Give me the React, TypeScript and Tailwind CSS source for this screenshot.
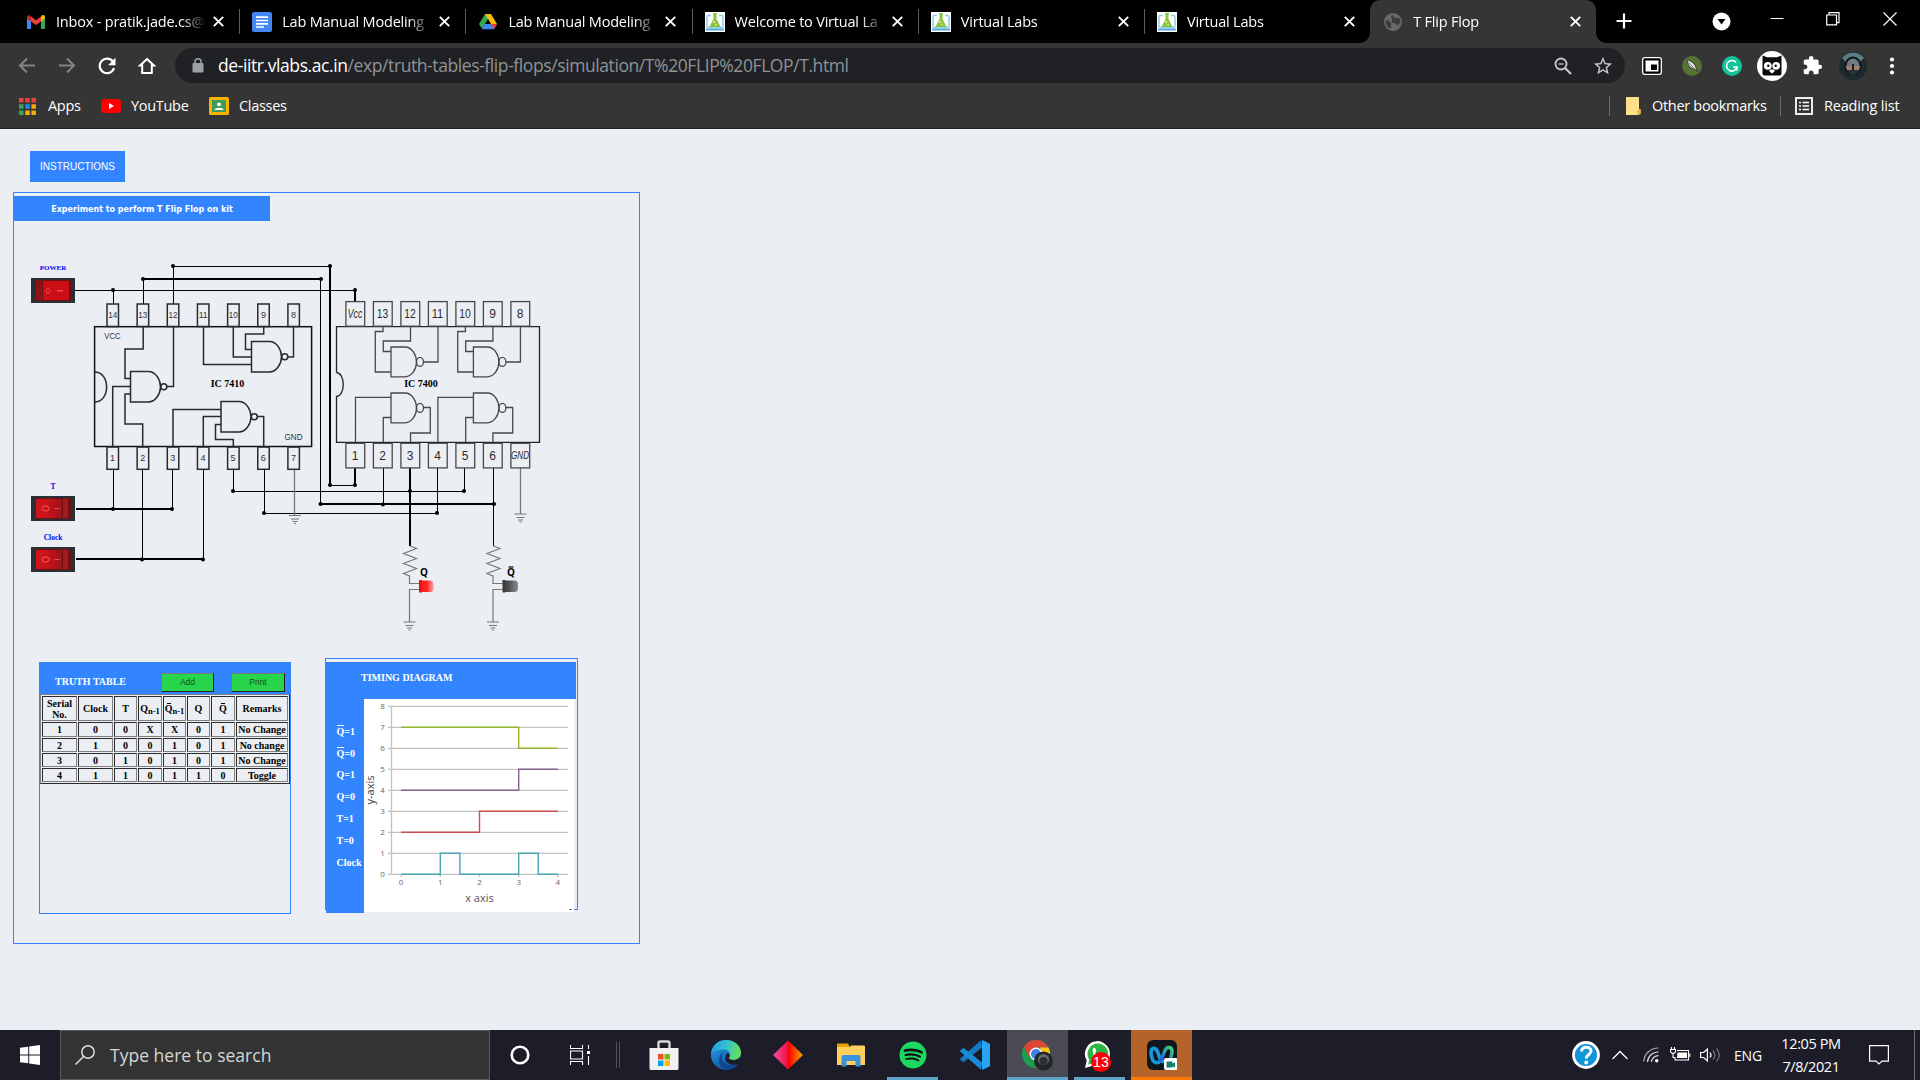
import React from "react";
import { FaSpotify } from "react-icons/fa";
import { MdExtension, MdStarBorder } from "react-icons/md";

const ui = "font-['Open_Sans','Noto_Sans',sans-serif]";
const serif = "font-['Liberation_Serif',serif]";

/* ---------- tab icons ---------- */

const GmailIcon = () => (
  <svg className="h-5 w-5" viewBox="0 0 20 20">
    <path d="M1 5v11.2c0 .5.4.8.9.8H5V9z" fill="#4285f4" />
    <path d="M19 5v11.2c0 .5-.4.8-.9.8H15V9z" fill="#34a853" />
    <path d="M15 4.6V9.4l4-3V5c0-2-2-2.6-3.2-1.6z" fill="#fbbc04" />
    <path d="M5 9.400V4.600l5 3.700 5-3.700v4.800l-5 3.700z" fill="#ea4335" />
    <path d="M1 5v1.400l4 3V4.600L4.200 3.800C3 2.600 1 3 1 5z" fill="#c5221f" />
  </svg>
);

const DocsIcon = () => (
  <svg className="h-5 w-5" viewBox="0 0 20 20">
    <rect width="20" height="20" rx="2" fill="#4285f4" />
    <path d="M4 5.200h12M4 8.500h12M4 11.800h12M4 15h8" stroke="#fff" strokeWidth="1.700" />
  </svg>
);

const DriveIcon = () => (
  <svg className="h-5 w-5" viewBox="0 0 20 20">
    <path d="M7 2h6l-3 5.200L4.200 17 1 12z" fill="#34a853" />
    <path d="M7 2h6l6 10h-6.200z" fill="#fbbc04" />
    <path d="M6.800 12H19l-3 5.300H4z" fill="#4285f4" />
    <path d="M13 12h6l-3 5.300z" fill="#ea4335" />
    <path d="M10 7.400 13 12H7z" fill="#000" />
  </svg>
);

const VlabsIcon = () => (
  <svg className="h-5 w-5" viewBox="0 0 20 20">
    <rect width="20" height="20" fill="#fff" />
    <path d="M6 3.500H3.500a1.500 1.500 0 0 0-1.500 1.500v9a1.500 1.500 0 0 0 1.500 1.500h13A1.500 1.500 0 0 0 18 14V5a1.500 1.500 0 0 0-1.500-1.500H14" fill="none" stroke="#8ccbe8" strokeWidth="1.500" />
    <path d="M8 1h4v1.500h-.500V7l4.200 8H4.300L8.500 7V2.500H8z" fill="#8bc53f" />
    <circle cx="9" cy="10" r="1" fill="#e8f5c8" />
    <circle cx="11" cy="12.500" r=".8" fill="#e8f5c8" />
    <path d="M1 17.500h18" stroke="#4fa9d8" strokeWidth="2" />
  </svg>
);

const GlobeIcon = () => (
  <svg className="h-5 w-5" viewBox="0 0 20 20">
    <circle cx="10" cy="10" r="9" fill="#66696d" />
    <path d="M3 8c3 .5 4 1.500 5 3s-1 2.500 0 4-2 2-3 0-3-4-2-7zM9 3c2 0 1 2.500 3 3s4-1 5 1 0 5-2 6-2-2-4-2-3-1.500-2-3-1-2-1-3z" fill="#3a3b3d" />
  </svg>
);

const Close = () => (
  <svg className="h-[11px] w-[11px]" viewBox="0 0 11 11">
    <path d="M.8.8l9.400 9.400M10.200.8L.8 10.200" stroke="#fff" strokeWidth="1.900" />
  </svg>
);

const tabs = [
  { icon: <GmailIcon />, label: "Inbox - pratik.jade.cs@" },
  { icon: <DocsIcon />, label: "Lab Manual Modeling" },
  { icon: <DriveIcon />, label: "Lab Manual Modeling" },
  { icon: <VlabsIcon />, label: "Welcome to Virtual La" },
  { icon: <VlabsIcon />, label: "Virtual Labs" },
  { icon: <VlabsIcon />, label: "Virtual Labs" },
];

function Tab({ icon, label, sep }: { icon: React.ReactNode; label: string; sep?: boolean }) {
  return (
    <div className="relative flex h-full w-[226.2px] items-center pl-[13px]">
      {icon}
      <div className="ml-[10px] w-[150px] overflow-hidden whitespace-nowrap text-[14.5px] tracking-[-0.200px] text-white [mask-image:linear-gradient(to_right,#000_84%,transparent)]">
        {label}
      </div>
      <div className="ml-[7px]">
        <Close />
      </div>
      {sep && <div className="absolute right-[-1px] top-[9px] h-[25px] w-px bg-[#5c5c5c]" />}
    </div>
  );
}

function TabStrip() {
  return (
    <div className="flex h-[43px] bg-black pl-[13px]">
      {tabs.map((t, i) => (
        <Tab key={i} icon={t.icon} label={t.label} sep={i < 5} />
      ))}
      <div className="relative h-full rounded-t-[10px] bg-[#353535]">
        <Tab icon={<GlobeIcon />} label="T Flip Flop" />
        <div className="absolute bottom-0 left-[-10px] h-[10px] w-[10px] bg-[radial-gradient(circle_at_0_0,#000_9.500px,#353535_10px)]" />
        <div className="absolute bottom-0 right-[-10px] h-[10px] w-[10px] bg-[radial-gradient(circle_at_100%_0,#000_9.500px,#353535_10px)]" />
      </div>
      <svg className="ml-[20px] mt-[13px] h-4 w-4" viewBox="0 0 16 16">
        <path d="M8 .5v15M.5 8h15" stroke="#fff" strokeWidth="2.200" />
      </svg>
      <svg className="ml-[80px] mt-[12px] h-[19px] w-[19px]" viewBox="0 0 19 19">
        <circle cx="9.500" cy="9.500" r="9" fill="#fff" />
        <path d="M5.500 7h8l-4 5.500z" fill="#000" />
      </svg>
      <svg className="ml-[39px] mt-[12px] h-[14px] w-[14px]" viewBox="0 0 14 14">
        <path d="M.5 6.500h13" stroke="#fff" />
      </svg>
      <svg className="ml-[42px] mt-[12px] h-[14px] w-[14px]" viewBox="0 0 14 14" fill="none" stroke="#fff" strokeWidth="1.200">
        <path d="M.7 3h9.800v9.800H.7zM3 3V.7h10v10h-2.500" />
      </svg>
      <svg className="ml-[43px] mt-[12px] h-[14px] w-[14px]" viewBox="0 0 14 14">
        <path d="M.5.500l13 13M13.500.500l-13 13" stroke="#fff" strokeWidth="1.200" />
      </svg>
    </div>
  );
}

function Toolbar() {
  return (
    <div className="flex h-[45px] items-center bg-[#353535]">
      <svg className="ml-[18px] h-[17px] w-[17px]" viewBox="0 0 17 17" fill="none" stroke="#848484" strokeWidth="2">
        <path d="M17 8.500H2M9 1.500l-7 7 7 7" />
      </svg>
      <svg className="ml-[24px] h-[17px] w-[17px]" viewBox="0 0 17 17" fill="none" stroke="#848484" strokeWidth="2">
        <path d="M0 8.500h15M8 1.500l7 7-7 7" />
      </svg>
      <svg className="ml-[22px] h-[18px] w-[18px]" viewBox="0 0 18 18">
        <path d="M15 4.700A7.300 7.300 0 1 0 16 11" fill="none" stroke="#fff" strokeWidth="2.200" />
        <path d="M17.500.8v7.400h-7.400z" fill="#fff" />
      </svg>
      <svg className="ml-[22px] h-[18px] w-[18px]" viewBox="0 0 18 18">
        <path d="M9 2l7 6.600h-2.200V16H4.200V8.600H2z" fill="none" stroke="#fff" strokeWidth="2" />
      </svg>
      <div className="ml-[19px] flex h-[35px] w-[1450px] items-center rounded-full bg-[#202124]">
        <svg className="ml-[17px] h-[15px] w-[12px]" viewBox="0 0 12 15">
          <rect x=".5" y="5" width="11" height="9.500" rx="1" fill="#9aa0a6" />
          <path d="M3 6V3.800a3 3 0 0 1 6 0V6" fill="none" stroke="#9aa0a6" strokeWidth="1.500" />
        </svg>
        <div className="ml-[14px] w-[1320px] whitespace-nowrap text-[17.500px] tracking-[-0.410px] text-[#8f9398]">
          <span className="text-white">de-iitr.vlabs.ac.in</span>/exp/truth-tables-flip-flops/simulation/T%20FLIP%20FLOP/T.html
        </div>
        <svg className="ml-[16px] h-[18px] w-[18px] shrink-0" viewBox="0 0 18 18" fill="none" stroke="#c4c7ca">
          <circle cx="7" cy="7" r="5.500" strokeWidth="1.900" />
          <path d="M11 11l6 6" strokeWidth="2.300" />
          <path d="M4.500 7h5" strokeWidth="1.300" />
        </svg>
        <MdStarBorder className="ml-[20px] h-[22px] w-[22px] shrink-0 text-[#c4c7ca]" />
      </div>
      <svg className="ml-[17px] h-[20px] w-[20px]" viewBox="0 0 20 20">
        <rect x=".7" y="1.700" width="18.600" height="16.600" rx="2" fill="#000" stroke="#fff" strokeWidth="1.300" />
        <rect x="3.500" y="4.500" width="13" height="11" fill="#fff" />
        <rect x="9" y="8.500" width="6" height="5.500" fill="#000" />
      </svg>
      <svg className="ml-[20px] h-[20px] w-[20px]" viewBox="0 0 20 20">
        <circle cx="10" cy="10" r="10" fill="#567335" />
        <path d="M5 4c5 1 8 4 9 8l1.500 3.500L12 13C8 12 5.500 8 5 4z" fill="#e8ece2" stroke="#222" strokeWidth=".8" />
        <path d="M6.500 6l7 8" stroke="#444" strokeWidth=".7" />
      </svg>
      <svg className="ml-[20px] h-[20px] w-[20px]" viewBox="0 0 20 20">
        <circle cx="10" cy="10" r="10" fill="#15c39a" />
        <path d="M14 6.500A5.300 5.300 0 1 0 15 11H11" fill="none" stroke="#fff" strokeWidth="1.700" />
        <path d="M14.900 10.500v4" stroke="#fff" strokeWidth="1.300" />
      </svg>
      <svg className="ml-[15px] h-[30px] w-[30px]" viewBox="0 0 30 30">
        <circle cx="15" cy="15" r="15" fill="#fff" />
        <path d="M5.500 4.500l4.500 1.800h10l4.500-1.800V22.500a2 2 0 0 1-2 2h-15a2 2 0 0 1-2-2z" fill="#0b0b0b" />
        <circle cx="10.800" cy="14.800" r="3.900" fill="#fff" />
        <circle cx="19.200" cy="14.800" r="3.900" fill="#fff" />
        <circle cx="11.300" cy="14.800" r="1.200" />
        <circle cx="18.700" cy="14.800" r="1.200" />
        <path d="M13.500 18.500h3L18 20l-3 2.500-3-2.500z" fill="#fff" />
      </svg>
      <MdExtension className="ml-[15px] h-[21px] w-[21px] text-white" />
      <svg className="ml-[16px] h-[28px] w-[28px]" viewBox="0 0 28 28">
        <circle cx="14" cy="14" r="14" fill="#1c2a2e" />
        <path d="M3 6A14 14 0 0 1 25 6L21 10 14 5 7 10z" fill="#5c7d86" />
        <ellipse cx="14" cy="14" rx="7.500" ry="8.500" fill="#6f7a82" stroke="#0f1719" strokeWidth="2" />
        <path d="M7 14h14c0 2-1 4-2 5H9c-1-1-2-3-2-5z" fill="#a07f72" />
        <path d="M8 18h12c-1 3-4 5-6 5s-5-2-6-5z" fill="#263438" />
        <path d="M13 12h2v7h-2z" fill="#171d20" />
      </svg>
      <svg className="ml-[22px] h-[18px] w-[6px]" viewBox="0 0 6 18" fill="#fff">
        <circle cx="3" cy="2.500" r="2.100" />
        <circle cx="3" cy="9" r="2.100" />
        <circle cx="3" cy="15.500" r="2.100" />
      </svg>
    </div>
  );
}

function Bookmarks() {
  return (
    <div className="flex h-[41px] items-center border-b border-[#222] bg-[#353535] pb-[4px] text-[14.500px] tracking-[-0.300px] text-white">
      <svg className="ml-[19px] h-[17px] w-[17px]" viewBox="0 0 17 17">
        <path d="M0 0h4.500v4.500H0zM6.200 0h4.500v4.500H6.200zM12.400 0h4.500v4.500h-4.500z" fill="#ea4335" />
        <path d="M0 6.200h4.500v4.500H0zM0 12.400h4.500v4.500H0z" fill="#34a853" />
        <path d="M6.200 6.200h4.500v4.500H6.200z" fill="#1a8cff" />
        <path d="M12.400 6.200h4.500v4.500h-4.500zM6.200 12.400h4.500v4.500H6.200zM12.400 12.400h4.500v4.500h-4.500z" fill="#f9ab00" />
      </svg>
      <span className="ml-[12px] w-[34px]">Apps</span>
      <svg className="ml-[19px] h-[14px] w-[20px]" viewBox="0 0 20 14">
        <rect width="20" height="14" rx="3.500" fill="#f00" />
        <path d="M8 4l5 3-5 3z" fill="#fff" />
      </svg>
      <span className="ml-[10px] w-[59px]">YouTube</span>
      <svg className="ml-[19px] h-[18px] w-[20px]" viewBox="0 0 20 18">
        <rect width="20" height="18" rx="1.500" fill="#f4b400" />
        <rect x="3" y="3" width="14" height="12" fill="#3d9c57" />
        <circle cx="10" cy="7.300" r="1.900" fill="#fff" />
        <path d="M5.500 13c0-3 9-3 9 0z" fill="#fff" />
      </svg>
      <span className="ml-[10px]">Classes</span>
      <div className="ml-auto h-[20px] w-px bg-[#6b6b6b]" />
      <svg className="ml-[15px] h-[18px] w-[16px]" viewBox="0 0 16 18">
        <path d="M1 0h13v12h1.500v5l-2.500 1H1z" fill="#ffe08a" />
        <path d="M13 18l-1-4 2-2h1.500v5z" fill="#e9bb3d" />
      </svg>
      <span className="ml-[11px] w-[117px]">Other bookmarks</span>
      <div className="ml-[11px] h-[20px] w-px bg-[#6b6b6b]" />
      <svg className="ml-[14px] h-[18px] w-[18px]" viewBox="0 0 18 18" fill="none" stroke="#fff">
        <rect x="1" y="1" width="16" height="16" strokeWidth="1.800" />
        <path d="M4 5.500h2M4 9h2M4 12.500h2M7.500 5.500H14M7.500 9H14M7.500 12.500H14" strokeWidth="1.600" />
      </svg>
      <span className="ml-[11px] w-[96px] whitespace-nowrap tracking-[-0.180px]">Reading list</span>
    </div>
  );
}

/* ---------- circuit ---------- */

function Switch({ x, y, on }: { x: number; y: number; on?: boolean }) {
  return (
    <g transform={`translate(${x} ${y})`}>
      <rect width="44" height="25" fill="#2b3036" />
      <rect x="4" y="2" width="36" height="21" rx="1.500" fill="#6d1014" />
      {on ? (
        <>
          <rect x="12" y="3" width="26" height="19" rx="1" fill="#cb0f15" />
          <path d="M5 3l6 -1v21l-6 -1z" fill="#8e1318" />
          <ellipse cx="17" cy="13" rx="1.800" ry="2.800" fill="none" stroke="#e8524f" strokeWidth=".8" />
          <path d="M26 12.800h6" stroke="#f0706c" />
        </>
      ) : (
        <>
          <rect x="5" y="3" width="26" height="19" rx="1" fill="url(#rocker)" />
          <path d="M32 2.500l5 .5v19l-5 .5z" fill="#a01b20" />
          <ellipse cx="14.500" cy="12.500" rx="3.600" ry="2.600" fill="none" stroke="#f0605c" />
          <path d="M23.500 12.500h5" stroke="#e8524f" />
        </>
      )}
    </g>
  );
}

function Ground({ x, y }: { x: number; y: number }) {
  return (
    <path d={`M${x - 6} ${y}h12M${x - 4} ${y + 3.500}h8M${x - 2.500} ${y + 6}h5M${x - 1} ${y + 8}h2`} stroke="#777" strokeWidth="1.200" />
  );
}

function Led({ x, lit }: { x: number; lit?: boolean }) {
  const lx = lit ? x + 14 : x + 17.5;
  return (
    <g>
      <path
        d={`M${x} 546l6.500 2.500-13 5 13 5-13 5 13 5-13 5 6 2.500v7.500h10M${x + 9} 589.500h-9.500V622`}
        fill="none"
        stroke="#777"
        strokeWidth="1.200"
      />
      <Ground x={x - 0.5} y={622} />
      <rect x={x + 9.500} y="580.500" width={lit ? 14 : 15} height="11.500" rx="3.500" fill={lit ? "url(#ledRed)" : "url(#ledGray)"} />
      <rect x={x + 9} y="580" width="3" height="12.500" fill={lit ? "#f01010" : "#3a3a3a"} />
      <text x={lx} y="576" textAnchor="middle" fontSize="10" fontWeight="700" fontFamily="Open Sans, sans-serif" fill="#000">
        Q
      </text>
      {!lit && <path d={`M${lx - 2.500} 567h5`} stroke="#000" strokeWidth="1.200" />}
    </g>
  );
}

const topPinsA = ["14", "13", "12", "11", "10", "9", "8"];
const botPinsA = ["1", "2", "3", "4", "5", "6", "7"];
const topPinsB = ["Vcc", "13", "12", "11", "10", "9", "8"];
const botPinsB = ["1", "2", "3", "4", "5", "6", "GND"];

const dots = [
  [113, 290], [355, 290], [143, 279], [321, 279], [173, 266], [330, 266], [330, 485], [355, 485], [320.5, 504],
  [383, 504.5], [494, 504], [437, 513], [464, 491], [410, 491], [113, 509], [172, 509], [142, 559.5], [203, 559.5],
  [233, 491], [264, 513],
];

function GateA({ x, y }: { x: number; y: number }) {
  return (
    <g>
      <path d={`M${x} ${y}h18c7 0 12 8 12 15.200s-5 15.200-12 15.200h-18z`} />
      <circle cx={x + 33.300} cy={y + 15.200} r="3" />
    </g>
  );
}

function GateB({ x, y }: { x: number; y: number }) {
  return (
    <g>
      <path d={`M${x} ${y}h14c7 0 11.500 8 11.500 14.900s-4.500 14.900-11.500 14.900h-14z`} />
      <ellipse cx={x + 29} cy={y + 14.900} rx="3.500" ry="4.500" />
    </g>
  );
}

function Circuit() {
  return (
    <svg className="block h-[430px] w-[625px]" viewBox="14 221 625 430">
      <defs>
        <linearGradient id="ledRed">
          <stop offset="0.500" stopColor="#ff2020" />
          <stop offset="1" stopColor="#ffa0a0" />
        </linearGradient>
        <linearGradient id="ledGray">
          <stop offset="0.300" stopColor="#484848" />
          <stop offset="1" stopColor="#8d8d8d" />
        </linearGradient>
        <linearGradient id="rocker">
          <stop offset="0.300" stopColor="#cf131a" />
          <stop offset="1" stopColor="#9d1318" />
        </linearGradient>
      </defs>

      <g fontFamily="Liberation Serif, serif" fontWeight="700" fontSize="7.500" fill="#0000ff" textAnchor="middle">
        <text x="53" y="269.500" fontSize="7">POWER</text>
        <text x="53" y="489">T</text>
        <text x="53" y="540.300">Clock</text>
      </g>
      <Switch x={31} y={278} on />
      <Switch x={31} y={496} />
      <Switch x={31} y={547} />

      <g fill="none" stroke="#000" strokeWidth="1">
        <path d="M75 290.500H355M113.500 290V304M143.500 279V304M173.500 266V304M173 266.500H330M320.500 279V504M330 485.500H355M383.500 468V504M437.500 468V513M264 513.500H437M464.500 468V491M233 491.500H464M493.500 468V546M113.500 469V509M142.500 469V559M172.500 469V509M203.500 469V559M233.500 469V491M264.500 469V513" />
        <path d="M143 279H321M330 266V485M355 468V485M355 290V302M320 504H494M410 468V546M76 509H172M76 559H203" strokeWidth="2" />
      </g>
      <path d="M294.500 469V515M520.500 468V514" stroke="#777" strokeWidth="1.300" />
      <Ground x={295} y={515.5} />
      <Ground x={520.5} y={514} />
      {dots.map(([x, y], i) => (
        <circle key={i} cx={x} cy={y} r="2" />
      ))}

      <g fill="none" stroke="#2a2a2a" strokeWidth="1.500">
        <rect x="94.600" y="326.700" width="217" height="119.800" stroke="#111" />
        <path d="M94.600 372c16 0 16 30 0 30" />
        {topPinsA.map((p, i) => (
          <rect key={p} x={107 + i * 30.150} y="304" width="11.500" height="22.500" />
        ))}
        {botPinsA.map((p, i) => (
          <rect key={p} x={107 + i * 30.150} y="447" width="11.500" height="22.300" />
        ))}
        <path d="M263.700 327v7h-18.200v15.500h6M233.300 327v30h18.200M203.500 327v37.500h48M287.500 357h6v-30" />
        <path d="M143.200 327v22H125v29.500h5.500M112.700 447v-60.500h17.800M142.700 447v-23H125v-30h5.500M166.500 386.500h7V327" />
        <path d="M173 447v-37.500h48M203.300 447v-30.500H221M233.300 447v-7.500h-17.800v-15H221M257 416.500h6.700V447" />
        <GateA x={251.500} y={341.500} />
        <GateA x={130.500} y={371.500} />
        <GateA x={221} y={401.500} />
      </g>
      <g fontFamily="Liberation Sans, sans-serif" fontSize="9" fill="#333" textAnchor="middle">
        {topPinsA.map((p, i) => (
          <text key={p} x={112.700 + i * 30.150} y="318" textLength={p.length === 2 ? 9 : undefined} lengthAdjust="spacingAndGlyphs">{p}</text>
        ))}
        {botPinsA.map((p, i) => (
          <text key={p} x={112.500 + i * 30.150} y="460.800">{p}</text>
        ))}
        <text x="112.500" y="338.700" textLength="16.500" lengthAdjust="spacingAndGlyphs">VCC</text>
        <text x="293.500" y="440" textLength="18" lengthAdjust="spacingAndGlyphs">GND</text>
      </g>

      <g fill="none" stroke="#484848" strokeWidth="1.300">
        <path d="M336.500 372.500V326.700h203v115.600h-203V396.500c9-1 9-23 0-24" stroke="#222" />
        {topPinsB.map((p, i) => (
          <rect key={p} x={345.900 + i * 27.500} y="301.600" width="18.800" height="24.600" />
        ))}
        {botPinsB.map((p, i) => (
          <rect key={p} x={345.900 + i * 27.500} y="443.300" width="18.800" height="24.600" />
        ))}
        {[0, 82.400].map((dx) => (
          <g key={dx} transform={`translate(${dx} 0)`}>
            <path d="M383 327v4.500h-7.700V372H391M410.500 327v14h-27.200v10.500H391M423.500 362H438V327" />
            <path d="M355.500 442v-44.700H391M383.300 442v-24.500H391M423.500 407.500h6.800V433h-19.800v9" />
            <GateB x={391} y={347} />
            <GateB x={391} y={393} />
          </g>
        ))}
      </g>
      <g fontFamily="Liberation Sans, sans-serif" fontSize="12" fill="#2b2b2b" textAnchor="middle">
        {topPinsB.map((p, i) => (
          <text key={p} x={355 + i * 27.500} y="318.300" fontStyle={i === 0 ? "italic" : "normal"} textLength={i === 0 ? 14.5 : p.length === 2 ? 11.5 : undefined} lengthAdjust="spacingAndGlyphs">
            {p}
          </text>
        ))}
        {botPinsB.map((p, i) => (
          <text key={p} x={355 + i * 27.500} y={i === 6 ? 459 : 460.300} fontStyle={i === 6 ? "italic" : "normal"} fontSize={i === 6 ? 10.500 : 12} textLength={p === "GND" ? 18 : undefined} lengthAdjust="spacingAndGlyphs">
            {p}
          </text>
        ))}
      </g>
      <g fontFamily="Liberation Serif, serif" fontWeight="700" fontSize="10" textAnchor="middle">
        <text x="227.500" y="387">IC 7410</text>
        <text x="421" y="387">IC 7400</text>
      </g>

      <Led x={410} lit />
      <Led x={493.5} />
    </svg>
  );
}

/* ---------- truth table ---------- */

const OverQ = () => (
  <span className="relative leading-none">
    Q
    <span className="absolute left-[2px] top-[-1px] h-px w-[4px] bg-current" />
  </span>
);

const rows = [
  ["1", "0", "0", "X", "X", "0", "1", "No Change"],
  ["2", "1", "0", "0", "1", "0", "1", "No change"],
  ["3", "0", "1", "0", "1", "0", "1", "No Change"],
  ["4", "1", "1", "0", "1", "1", "0", "Toggle"],
];

const cell =
  "flex items-center justify-center border border-b-[#808080] border-l-[#2b2b2b] border-r-[#808080] border-t-[#2b2b2b] whitespace-nowrap text-center";

const btn =
  "mt-[10px] h-[19px] border border-b-[#222] border-l-[#777] border-r-[#222] border-t-[#777] bg-[#28d44c] font-['Liberation_Sans',sans-serif] text-[8.500px] font-normal text-[#11511f]";

function TruthTable() {
  return (
    <div className={`h-[252px] w-[252px] border border-[#3385ff] text-[10px] font-bold leading-[11px] ${serif}`}>
      <div className="flex h-[31px] bg-[#3385ff] text-white">
        <span className="ml-[15px] mt-[13px] w-[106px]">TRUTH TABLE</span>
        <button className={`w-[53px] ${btn}`}>Add</button>
        <button className={`ml-[17px] w-[54px] ${btn}`}>Print</button>
      </div>
      <div className="grid w-[250px] grid-cols-[35px_35px_23px_24px_23px_23px_24px_52px] grid-rows-[25px_15px_14px_14px_14px] gap-px border border-b-[#2b2b2b] border-l-[#808080] border-r-[#2b2b2b] border-t-[#808080] p-px text-black">
        <div className={cell}>Serial<br />No.</div>
        <div className={cell}>Clock</div>
        <div className={cell}>T</div>
        <div className={cell}>Q<sub className="text-[8.500px]">n-1</sub></div>
        <div className={cell}><OverQ /><sub className="text-[8.500px]">n-1</sub></div>
        <div className={cell}>Q</div>
        <div className={cell}><OverQ /></div>
        <div className={cell}>Remarks</div>
        {rows.flat().map((v, i) => (
          <div key={i} className={cell}>{v}</div>
        ))}
      </div>
    </div>
  );
}

/* ---------- timing diagram ---------- */

function Chart() {
  const gy = (v: number) => 874.3 - v * 21;
  const gx = (v: number) => 401.100 + v * 39.200;
  return (
    <svg className="block h-[213px] w-[210px] bg-white" viewBox="364 699 210 213">
      <g stroke="#c2c2c2" strokeWidth="1.300">
        {[0, 1, 2, 3, 4, 5, 6, 7, 8].map((v) => (
          <path key={v} d={`M388 ${gy(v)}H568`} />
        ))}
        <path d="M391.500 706V875" />
        {[0, 1, 2, 3, 4].map((v) => (
          <path key={v} d={`M${gx(v)} 874v3`} />
        ))}
      </g>
      <g fill="none" strokeWidth="1.400">
        <path d={`M${gx(0)} ${gy(7)}H${gx(3)}V${gy(6)}H${gx(4)}`} stroke="#93b82e" />
        <path d={`M${gx(0)} ${gy(4)}H${gx(3)}V${gy(5)}H${gx(4)}`} stroke="#84638f" />
        <path d={`M${gx(0)} ${gy(2)}H${gx(2)}V${gy(3)}H${gx(4)}`} stroke="#c9504e" />
        <path d={`M${gx(0)} ${gy(0)}H${gx(1)}V${gy(1)}H${gx(1.5)}V${gy(0)}H${gx(3)}V${gy(1)}H${gx(3.5)}V${gy(0)}H${gx(4)}`} stroke="#48a5b4" />
      </g>
      <g fontFamily="Open Sans, sans-serif" fontSize="8" fontWeight="400" fill="#666" textAnchor="middle">
        {[0, 1, 2, 3, 4, 5, 6, 7, 8].map((v) => (
          <text key={v} x="382.500" y={gy(v) + 2.500}>{v}</text>
        ))}
        {[0, 1, 2, 3, 4].map((v) => (
          <text key={v} x={gx(v)} y="885">{v}</text>
        ))}
        <text x="479.500" y="901.500" fontSize="11" fill="#555">x axis</text>
        <text transform="translate(373.500 790) rotate(-90)" fontSize="11" fill="#444">y-axis</text>
      </g>
      <path d="M569.500 909.500h2" stroke="#444" />
    </svg>
  );
}

function TimingDiagram() {
  const label = "h-[22px]";
  return (
    <div className={`h-[252px] w-[253px] border border-[#3385ff] pt-[3px] text-[10px] font-bold leading-[11px] text-white ${serif}`}>
      <div className="h-[37px] w-[250px] bg-[#3385ff] pl-[35px] pt-[10px]">TIMING DIAGRAM</div>
      <div className="flex">
        <div className="h-[214px] w-[38px] shrink-0 bg-[#3385ff] pl-[10.500px] pt-[26px]">
          <div className={label}><span className="inline-block border-t border-white leading-[11px]">Q</span>=1</div>
          <div className={label}><span className="inline-block border-t border-white leading-[11px]">Q</span>=0</div>
          <div className={label}>Q=1</div>
          <div className={label}>Q=0</div>
          <div className={label}>T=1</div>
          <div className={label}>T=0</div>
          <div className={label}>Clock</div>
        </div>
        <Chart />
      </div>
    </div>
  );
}

function Page() {
  return (
    <main className="h-[901px] bg-[#ebeff4] pl-[13px] pt-[22px]">
      <button className="ml-[17px] block h-[31px] w-[95px] bg-[#3385ff] font-['Liberation_Sans',sans-serif] text-[10px] text-white">
        INSTRUCTIONS
      </button>
      <section className="mt-[10px] h-[752px] w-[627px] border border-[#3385ff] pt-[3px]">
        <div className="flex h-[25px] w-[256px] items-center justify-center bg-[#3385ff] pt-[2px] text-[8px] font-bold text-white [font-family:'DejaVu_Sans',Verdana,sans-serif]">
          Experiment to perform T Flip Flop on kit
        </div>
        <Circuit />
        <div className="flex items-start pl-[25px]">
          <div className="mt-[11px]">
            <TruthTable />
          </div>
          <div className="ml-[34px] mt-[7px]">
            <TimingDiagram />
          </div>
        </div>
      </section>
    </main>
  );
}

/* ---------- taskbar ---------- */

const StoreIcon = () => (
  <svg className="h-[30px] w-[30px]" viewBox="0 0 30 30">
    <path d="M9.500 10V3a1.500 1.500 0 0 1 1.500-1.500h8A1.500 1.500 0 0 1 20.500 3v7" fill="none" stroke="#d8d8d8" strokeWidth="2.400" />
    <path d="M.5 8h29v20.500a1.500 1.500 0 0 1-1.500 1.500H2a1.500 1.500 0 0 1-1.500-1.500z" fill="#f1f1f1" />
    <path d="M9 14h5.500v5.500H9z" fill="#f25022" />
    <path d="M15.500 14H21v5.500h-5.500z" fill="#7fba00" />
    <path d="M9 20.500h5.500V26H9z" fill="#00a4ef" />
    <path d="M15.500 20.500H21V26h-5.500z" fill="#ffb900" />
  </svg>
);

const EdgeIcon = () => (
  <svg className="h-[30px] w-[30px]" viewBox="0 0 30 30">
    <defs>
      <linearGradient id="edgeTop" x1="0" y1="0.300" x2="1" y2="0.500">
        <stop offset="0" stopColor="#1f9fe0" />
        <stop offset="0.500" stopColor="#35c1d0" />
        <stop offset="1" stopColor="#6ae04f" />
      </linearGradient>
      <linearGradient id="edgeLeft" x1="0" y1="0" x2="0.600" y2="1">
        <stop offset="0" stopColor="#2aa6ea" />
        <stop offset="1" stopColor="#0c4fa5" />
      </linearGradient>
    </defs>
    <circle cx="15" cy="15" r="15" fill="url(#edgeLeft)" />
    <path d="M0 14C1 5 7 0 15 0c9 0 15 6 15 12.500 0 5-3.500 7.500-7.500 7.500-3.500 0-5-1.300-4.500-2.300 2-2.700 1-8.200-5-8.200C7 9.500 1.500 11 0 14z" fill="url(#edgeTop)" />
    <path d="M13 12c-3 3-3 8 1 11s9 2.500 13 .5c-3 5-8 6.500-12 6.500-5-2-7.500-6-7-10.500.5-4 2.500-6.500 5-7.500z" fill="#12478f" />
    <path d="M18 17.700c-.5 1 1 2.300 4.500 2.300 3 0 5.500-1.500 6.800-3.500L30 21l-3 3c-5 1.500-10 .5-12-3-1.500-3-.5-7 2-8 2 1 2 3.500 1 4.700z" fill="#1c1d29" />
  </svg>
);

const DiamondIcon = () => (
  <svg className="h-[30px] w-[30px]" viewBox="0 0 30 30">
    <defs>
      <linearGradient id="diamond">
        <stop offset="0" stopColor="#f24fb0" />
        <stop offset="0.480" stopColor="#ee1240" />
        <stop offset="0.520" stopColor="#f90000" />
        <stop offset="1" stopColor="#f9a400" />
      </linearGradient>
    </defs>
    <path d="M15 .5L30 15 15 29.500 0 15z" fill="url(#diamond)" />
  </svg>
);

const FolderIcon = () => (
  <svg className="h-[30px] w-[30px]" viewBox="0 0 30 30">
    <path d="M1 5a1 1 0 0 1 1-1.500h10l2 3.500H1z" fill="#e8a200" />
    <path d="M1 7h13l1-1.500h13a1 1 0 0 1 1 1V25H1z" fill="#ffd05c" />
    <path d="M5.500 26.500V17a2 2 0 0 1 2-2h15a2 2 0 0 1 2 2v9.500h-5V21h-9v5.500z" fill="#3b93dc" />
  </svg>
);

const CodeIcon = () => (
  <svg className="h-[30px] w-[30px]" viewBox="0 0 30 30">
    <path d="M22 7.500L4.500 21.500a1.500 1.500 0 0 1-2 0L.5 19.800a1 1 0 0 1 0-1.600L21 .3z" fill="#1579bf" />
    <path d="M22 22.500L4.500 8.500a1.500 1.500 0 0 0-2 0L.5 10.200a1 1 0 0 0 0 1.600L21 29.700z" fill="#1a8ad4" />
    <path d="M22 0l7 3.200a1.500 1.500 0 0 1 1 1.400v20.800a1.500 1.500 0 0 1-1 1.400L22 30z" fill="#27a5f2" />
  </svg>
);

const ChromeIcon = () => (
  <svg className="h-[32px] w-[32px]" viewBox="0 0 32 32">
    <circle cx="15" cy="15" r="14" fill="#1e9c50" />
    <path d="M2.900 8A14 14 0 0 1 27.500 8.500H15L8.500 18z" fill="#df4436" />
    <path d="M27.500 8.500A14 14 0 0 1 15 29l6.500-11L19 8.500z" fill="#fbc719" />
    <circle cx="15" cy="15" r="6.500" fill="#fff" />
    <circle cx="15" cy="15" r="5" fill="#3f7fe8" />
    <circle cx="22.500" cy="22" r="9.500" fill="#222728" />
    <circle cx="22.500" cy="20.500" r="5.500" fill="#6c6c69" />
    <circle cx="22.500" cy="22" r="4" fill="#2b3030" />
  </svg>
);

const WebexIcon = () => (
  <svg className="h-[30px] w-[30px]" viewBox="0 0 30 30">
    <defs>
      <linearGradient id="webexRight" x1="0" y1="1" x2="1" y2="0">
        <stop offset="0" stopColor="#1a5fe0" />
        <stop offset="1" stopColor="#3fd07a" />
      </linearGradient>
    </defs>
    <rect width="30" height="30" rx="6" fill="#11171c" />
    <path d="M13 21c-2 3-6 2-7.500-1.500C4 15.500 3 9.500 6 8.500c4-1 5 4 6 7.500 1 3.500 2.500 6 5 5.500" fill="none" stroke="#1698dc" strokeWidth="3.600" strokeLinecap="round" />
    <path d="M13.500 20c3.500-3 3-11.500 7.500-12.500 5-.5 4.500 5 3 9" fill="none" stroke="url(#webexRight)" strokeWidth="3.600" strokeLinecap="round" />
    <path d="M17 20a2 2 0 0 1 2-2h10a1.500 1.500 0 0 1 1.500 1.500V28a2 2 0 0 1-2 2H19a2 2 0 0 1-2-2z" fill="#fff" />
    <path d="M19.500 21.500h6v2l2.500-1v5l-2.500-1v1h-6z" fill="#13806a" />
  </svg>
);

function Task({ children, cls, bar }: { children: React.ReactNode; cls?: string; bar?: string }) {
  return (
    <div className="flex h-full w-[62.200px] justify-center">
      <div className={`relative flex h-full w-[61px] items-center justify-center ${cls ?? ""}`}>
        {children}
        {bar && <div className={`absolute bottom-0 h-[3px] ${bar}`} />}
      </div>
    </div>
  );
}

function Taskbar() {
  return (
    <footer className="flex h-[50px] items-center bg-[#1c1d28]">
      <svg className="ml-[20px] h-5 w-5" viewBox="0 0 20 20" fill="#fff">
        <path d="M0 2.800L8.200 1.700v7.800H0zM9.200 1.500L20 0v9.500H9.200zM0 10.500h8.200v7.800L0 17.200zM9.200 10.500H20V20L9.200 18.500z" />
      </svg>
      <div className="ml-[20px] flex h-full w-[430px] items-center border border-[#5b5b5b] bg-[#333]">
        <svg className="ml-[14px] h-[20px] w-[20px]" viewBox="0 0 20 20" fill="none" stroke="#ddd" strokeWidth="1.500">
          <circle cx="13" cy="7" r="6.200" />
          <path d="M8.500 11.500L.5 19.500" />
        </svg>
        <span className="ml-[15px] text-[17.500px] tracking-[0.020px] text-[#d6d6d6]">Type here to search</span>
      </div>
      <svg className="ml-[20px] h-[20px] w-[20px]" viewBox="0 0 20 20">
        <circle cx="10" cy="10" r="8.300" fill="none" stroke="#fff" strokeWidth="2.600" />
      </svg>
      <svg className="ml-[40px] h-[20px] w-[20px]" viewBox="0 0 20 20" fill="none" stroke="#fff" strokeWidth="1.100">
        <path d="M.5 0v3.500h12V0M.5 20v-3.500h12V20M.5 6h12v8H.5zM18.500 0v4M18.500 11v9" />
        <path d="M17 6h3v3h-3z" fill="#fff" stroke="none" />
      </svg>
      <div className="ml-[26px] h-[26px] w-[4px] border-x border-[#50515c]" />
      <div className="ml-[13px] flex h-full">
        <Task><StoreIcon /></Task>
        <Task><EdgeIcon /></Task>
        <Task><DiamondIcon /></Task>
        <Task><FolderIcon /></Task>
        <Task bar="w-[51px] bg-[#5fa5cb]">
          <span className="flex h-[28px] w-[28px] items-center justify-center rounded-full bg-[#111]">
            <FaSpotify className="h-[28px] w-[28px] text-[#1ed760]" />
          </span>
        </Task>
        <Task><CodeIcon /></Task>
        <Task cls="bg-[#4a4b54]" bar="w-[61px] bg-[#5fa5cb]"><ChromeIcon /></Task>
        <Task bar="w-[51px] bg-[#5fa5cb]">
          <svg className="h-[30px] w-[30px]" viewBox="0 0 30 30">
            <path d="M14 1a13 13 0 0 0-11.300 19.500L1 28l7-2A13 13 0 1 0 14 1z" fill="#fff" />
            <path d="M14 3.500a10.500 10.500 0 0 0-8.800 16.200L4.200 24.500l4.500-1.300A10.500 10.500 0 1 0 14 3.500z" fill="#2bb741" />
            <path d="M9 8.500c1-1 2-1 2.500.5l.8 2c.2.800-1.300 1.800-1 2.300 1 2 2.500 3.200 4.500 4 .6.200 1.500-1.500 2.200-1.200l2.500 1.300-.5 3C14 22 7 15 9 8.500z" fill="#fff" />
          </svg>
          <span className="absolute left-[22px] top-[22px] flex h-[20px] w-[20px] items-center justify-center rounded-full bg-[#fb0007] font-['Liberation_Sans',sans-serif] text-[14px] leading-none text-white">
            13
          </span>
        </Task>
        <Task cls="bg-[#b46428]" bar="w-[61px] bg-[#ff7b00]"><WebexIcon /></Task>
      </div>
      <svg className="ml-auto h-[28px] w-[28px]" viewBox="0 0 28 28">
        <circle cx="14" cy="14" r="12.500" fill="#1296db" stroke="#fff" strokeWidth="2.800" />
        <path d="M9.500 10.500c0-6 9.500-5.500 9.500-.5 0 3.500-4.700 3.500-4.700 7.500" fill="none" stroke="#fff" strokeWidth="3" />
        <circle cx="14.200" cy="21.500" r="1.900" fill="#fff" />
      </svg>
      <svg className="ml-[12px] h-[10px] w-[16px]" viewBox="0 0 16 10">
        <path d="M.5 9L8 1.500 15.500 9" fill="none" stroke="#fff" strokeWidth="1.300" />
      </svg>
      <svg className="ml-[15px] h-[16px] w-[16px]" viewBox="0 0 16 16" fill="none" stroke="#ddd" strokeWidth="1.200">
        <path d="M.7 14.500A14.500 14.500 0 0 1 15.500 1" stroke="#aaa" />
        <path d="M4.500 15A10.500 10.500 0 0 1 15.500 5M8.300 15A7 7 0 0 1 15.500 8.700" />
        <circle cx="13.700" cy="13.700" r="1.700" fill="#fff" stroke="none" />
      </svg>
      <svg className="ml-[11px] h-[16px] w-[21px]" viewBox="0 0 21 16" fill="none" stroke="#fff" strokeWidth="1.100">
        <path d="M7 3.500h11.500v9.500H5V10" />
        <path d="M7.500 5.500H17v5.500H7z" fill="#fff" stroke="none" />
        <path d="M19.800 6.500v3.500M1.500 0v2.500M4.500 0v2.500M.5 2.500h5v2.500L3 7 .5 5zM3 7v3.500h2" />
      </svg>
      <svg className="ml-[9px] h-[16px] w-[21px]" viewBox="0 0 21 16" fill="none" strokeWidth="1.200">
        <path d="M.6 5.500h3L7.400 2v12L3.600 10.500h-3zM10 5.500c1.200 1.500 1.200 3.500 0 5" stroke="#fff" />
        <path d="M13 3.500c2.300 2.700 2.300 6.300 0 9M16.500 1.500c3.500 4 3.500 9 0 13" stroke="#777" />
      </svg>
      <span className="ml-[13px] w-[29px] text-[14px] tracking-[-0.200px] text-white">ENG</span>
      <div className="ml-[16px] w-[64px] whitespace-nowrap text-center text-[14.500px] leading-[23px] tracking-[-0.400px] text-white">
        12:05 PM
        <br />
        7/8/2021
      </div>
      <svg className="ml-[26px] h-[20px] w-[20px]" viewBox="0 0 20 20">
        <path d="M.6.600h18.800v15.500h-6.400L10 19l-3-2.900H.6z" fill="none" stroke="#fff" strokeWidth="1.200" />
      </svg>
      <div className="ml-[25px] mr-[5px] h-full w-px bg-[#6a6b73]" />
    </footer>
  );
}

export default function App() {
  return (
    <div className={`h-[1080px] w-[1920px] overflow-hidden ${ui}`}>
      <TabStrip />
      <Toolbar />
      <Bookmarks />
      <Page />
      <Taskbar />
    </div>
  );
}
